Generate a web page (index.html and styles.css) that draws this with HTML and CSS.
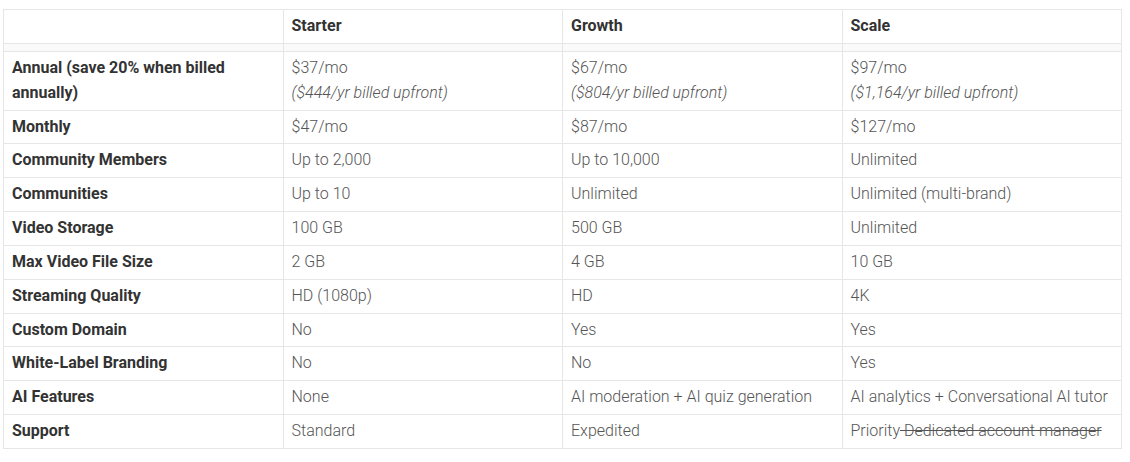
FILE: index.html
```html
<!DOCTYPE html>
<html>
<head>
<meta charset="utf-8">
<link rel="stylesheet" href="styles.css">
</head>
<body>
<div class="wrap">
<table class="plans">
  <thead>
    <tr><th></th><th>Starter</th><th>Growth</th><th>Scale</th></tr>
    <tr class="spacer"><td></td><td></td><td></td><td></td></tr>
  </thead>
  <tbody>
    <tr><th>Annual (save 20% when billed annually)</th><td>$37/mo<br><em>($444/yr billed upfront)</em></td><td>$67/mo<br><em>($804/yr billed upfront)</em></td><td>$97/mo<br><em>($1,164/yr billed upfront)</em></td></tr>
    <tr><th>Monthly</th><td>$47/mo</td><td>$87/mo</td><td>$127/mo</td></tr>
    <tr><th>Community Members</th><td>Up to 2,000</td><td>Up to 10,000</td><td>Unlimited</td></tr>
    <tr><th>Communities</th><td>Up to 10</td><td>Unlimited</td><td>Unlimited (multi-brand)</td></tr>
    <tr><th>Video Storage</th><td>100 GB</td><td>500 GB</td><td>Unlimited</td></tr>
    <tr><th>Max Video File Size</th><td>2 GB</td><td>4 GB</td><td>10 GB</td></tr>
    <tr><th>Streaming Quality</th><td>HD (1080p)</td><td>HD</td><td>4K</td></tr>
    <tr><th>Custom Domain</th><td>No</td><td>Yes</td><td>Yes</td></tr>
    <tr><th>White-Label Branding</th><td>No</td><td>No</td><td>Yes</td></tr>
    <tr><th>AI Features</th><td>None</td><td>AI moderation + AI quiz generation</td><td>AI analytics + Conversational AI tutor</td></tr>
    <tr><th>Support</th><td>Standard</td><td>Expedited</td><td>Priority<s>&nbsp;Dedicated account manager</s></td></tr>
  </tbody>
</table>
</div>
</body>
</html>
```

FILE: styles.css
```css
html, body {
  margin: 0;
  padding: 0;
  background: #ffffff;
}

.wrap {
  padding: 9px 8px 0 3px;
}

.plans {
  width: 1119px;
  table-layout: fixed;
  border-collapse: collapse;
  font-family: Roboto, "Liberation Sans", sans-serif;
  font-size: 16px;
  line-height: 24.85px;
  color: #555555;
}

.plans th,
.plans td {
  border: 1px solid #e6e6e6;
  padding: 4px 8px 4px 8px;
  text-align: left;
  vertical-align: top;
}

.plans th {
  font-weight: 700;
  color: #333333;
}

.plans td {
  font-weight: 300;
}

.plans .spacer td {
  height: 7px;
  padding: 0;
  background: #fafafa;
  border-top: 1px solid #e6e6e6;
  border-bottom: 1px solid #e6e6e6;
}

.plans em {
  font-style: italic;
}

.plans s {
  color: #555555;
}
```
